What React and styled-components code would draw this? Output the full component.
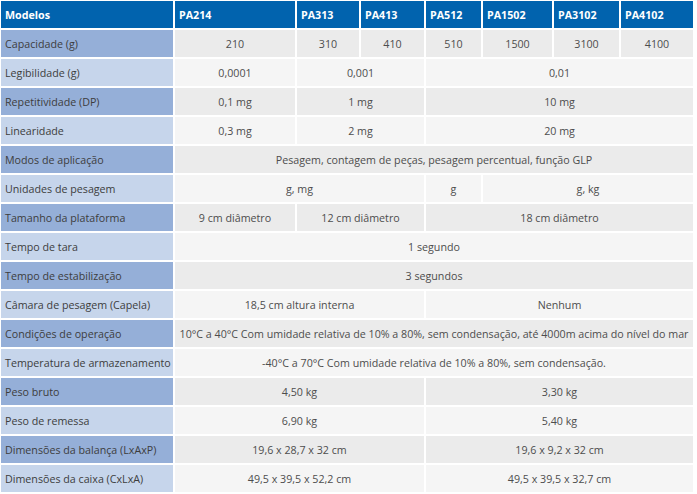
import React from 'react';
import styled, { createGlobalStyle } from 'styled-components';

const GlobalStyle = createGlobalStyle`
  html, body {
    margin: 0;
    padding: 0;
    background: #ffffff;
  }
  body {
    font-family: "Open Sans", "Liberation Sans", sans-serif;
  }
`;

const SpecTable = styled.div`
  display: grid;
  grid-template-columns: 172px 120px 62px 63px 55px 69px 65px 72px;
  grid-auto-rows: 27px;
  gap: 2px;
  padding: 1px 0 0 1px;
  font-size: 10.7px;
`;

const HeadCell = styled.div`
  background: #0163ae;
  color: #ffffff;
  font-weight: 700;
  display: flex;
  align-items: center;
  padding-left: 4px;
  white-space: nowrap;
`;

const LabelCell = styled.div`
  background: ${(p) => (p.$dark ? '#95afd8' : '#c6d5eb')};
  color: #3d3d3d;
  display: flex;
  align-items: center;
  padding-left: 4px;
  white-space: nowrap;
`;

const ValueCell = styled.div`
  grid-column: span ${(p) => p.$span || 1};
  background: ${(p) => (p.$dark ? '#ebebeb' : '#f5f5f5')};
  color: #4d4d4d;
  display: flex;
  align-items: center;
  justify-content: center;
  white-space: nowrap;
`;

const models = ['PA214', 'PA313', 'PA413', 'PA512', 'PA1502', 'PA3102', 'PA4102'];

const rows = [
  ['Capacidade (g)', [['210'], ['310'], ['410'], ['510'], ['1500'], ['3100'], ['4100']]],
  ['Legibilidade (g)', [['0,0001'], ['0,001', 2], ['0,01', 4]]],
  ['Repetitividade (DP)', [['0,1 mg'], ['1 mg', 2], ['10 mg', 4]]],
  ['Linearidade', [['0,3 mg'], ['2 mg', 2], ['20 mg', 4]]],
  ['Modos de aplicação', [['Pesagem, contagem de peças, pesagem percentual, função GLP', 7]]],
  ['Unidades de pesagem', [['g, mg', 3], ['g'], ['g, kg', 3]]],
  ['Tamanho da plataforma', [['9 cm diâmetro'], ['12 cm diâmetro', 2], ['18 cm diâmetro', 4]]],
  ['Tempo de tara', [['1 segundo', 7]]],
  ['Tempo de estabilização', [['3 segundos', 7]]],
  ['Câmara de pesagem (Capela)', [['18,5 cm altura interna', 3], ['Nenhum', 4]]],
  ['Condições de operação', [['10°C a 40°C Com umidade relativa de 10% a 80%, sem condensação, até 4000m acima do nível do mar', 7]]],
  ['Temperatura de armazenamento', [['-40°C a 70°C Com umidade relativa de 10% a 80%, sem condensação.', 7]]],
  ['Peso bruto', [['4,50 kg', 3], ['3,30 kg', 4]]],
  ['Peso de remessa', [['6,90 kg', 3], ['5,40 kg', 4]]],
  ['Dimensões da balança (LxAxP)', [['19,6 x 28,7 x 32 cm', 3], ['19,6 x 9,2 x 32 cm', 4]]],
  ['Dimensões da caixa (CxLxA)', [['49,5 x 39,5 x 52,2 cm', 3], ['49,5 x 39,5 x 32,7 cm', 4]]],
];

export default function App() {
  return (
    <>
      <GlobalStyle />
      <SpecTable>
        <HeadCell>Modelos</HeadCell>
        {models.map((m) => (
          <HeadCell key={m}>{m}</HeadCell>
        ))}
        {rows.map(([label, cells], i) => (
          <React.Fragment key={label}>
            <LabelCell $dark={i % 2 === 0}>{label}</LabelCell>
            {cells.map(([text, span], j) => (
              <ValueCell key={j} $span={span} $dark={i % 2 === 0}>
                {text}
              </ValueCell>
            ))}
          </React.Fragment>
        ))}
      </SpecTable>
    </>
  );
}
